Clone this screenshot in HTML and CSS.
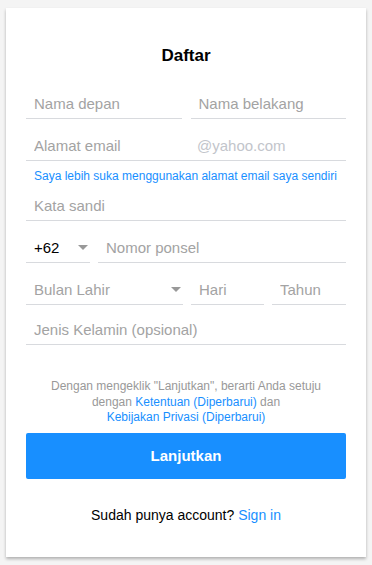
FILE: index.html
```html
<!DOCTYPE html>
<html lang="id">
<head>
<meta charset="utf-8">
<title>Daftar</title>
<link rel="stylesheet" href="styles.css">
</head>
<body>
<div class="card">
  <h1 class="title">Daftar</h1>
  <form class="form">
    <div class="row">
      <div class="field grow"><input class="inp" placeholder="Nama depan"></div>
      <div class="field grow"><input class="inp" placeholder="Nama belakang"></div>
    </div>
    <div class="row">
      <div class="field grow email">
        <input class="inp" placeholder="Alamat email">
        <span class="suffix">@yahoo.com</span>
      </div>
    </div>
    <a class="own-email" href="#">Saya lebih suka menggunakan alamat email saya sendiri</a>
    <div class="row tight">
      <div class="field grow"><input class="inp" type="password" placeholder="Kata sandi"></div>
    </div>
    <div class="row gap8">
      <div class="field select code"><span class="value">+62</span><span class="caret"></span></div>
      <div class="field grow"><input class="inp" placeholder="Nomor ponsel"></div>
    </div>
    <div class="row gap8">
      <div class="field select month"><span class="ph">Bulan Lahir</span><span class="caret"></span></div>
      <div class="field day"><input class="inp" placeholder="Hari"></div>
      <div class="field grow"><input class="inp" placeholder="Tahun"></div>
    </div>
    <div class="row last">
      <div class="field grow"><input class="inp" placeholder="Jenis Kelamin (opsional)"></div>
    </div>
    <p class="terms">Dengan mengeklik "Lanjutkan", berarti Anda setuju<br>dengan <a href="#">Ketentuan (Diperbarui)</a> dan<br><a href="#">Kebijakan Privasi (Diperbarui)</a></p>
    <button class="btn" type="button">Lanjutkan</button>
  </form>
  <p class="signin">Sudah punya account? <a href="#">Sign in</a></p>
</div>
</body>
</html>
```
FILE: styles.css
```css
* { box-sizing: border-box; }
html, body { margin: 0; padding: 0; }
body {
  background: #f4f4f4;
  font-family: "Liberation Sans", Arial, Helvetica, sans-serif;
  color: #000;
}
.card {
  margin: 8px 6px;
  width: 360px;
  height: 549px;
  background: #fff;
  box-shadow: 0 2px 3px rgba(0, 0, 0, 0.28);
  padding: 0 20px;
  display: flex;
  flex-direction: column;
}
.title {
  margin: 38px 0 0;
  font-size: 17px;
  line-height: 20px;
  font-weight: bold;
  text-align: center;
}
.form { display: flex; flex-direction: column; margin-top: 22px; }
.row {
  display: flex;
  gap: 9px;
  margin-top: 11px;
}
.row:first-child { margin-top: 0; }
.row.gap8 { gap: 8px; }
.row.tight { margin-top: 7px; }
.row.last { margin-top: 9px; }
.field {
  height: 31px;
  border-bottom: 1px solid #d8dade;
  display: flex;
  align-items: center;
  min-width: 0;
}
.grow { flex: 1; }
.inp {
  border: 0;
  outline: none;
  background: transparent;
  width: 100%;
  min-width: 0;
  height: 30px;
  padding: 0 0 0 8px;
  font-family: "Liberation Sans", Arial, Helvetica, sans-serif;
  font-size: 15px;
  color: #000;
}
.inp::placeholder { color: #a3a3a3; opacity: 1; }
.email .inp { flex: 1; }
.suffix {
  width: 149px;
  flex: none;
  font-size: 15px;
  color: #c2c5cb;
}
.own-email {
  display: block;
  margin-top: 8px;
  padding-left: 8px;
  font-size: 12px;
  line-height: 14px;
  color: #188fff;
  text-decoration: none;
  white-space: nowrap;
}
.select {
  padding: 0 2px 0 8px;
  justify-content: space-between;
  font-size: 15px;
}
.select .value { color: #000; }
.select .ph { color: #a3a3a3; }
.code { width: 64px; flex: none; }
.month { width: 157px; flex: none; }
.day { width: 73px; flex: none; }
.caret {
  width: 0;
  height: 0;
  border-left: 5px solid transparent;
  border-right: 5px solid transparent;
  border-top: 5px solid #999;
}
.terms {
  margin: 34px 0 0;
  text-align: center;
  font-size: 12px;
  line-height: 15.5px;
  color: #999;
}
.terms a { color: #188fff; text-decoration: none; }
.btn {
  margin-top: 7px;
  height: 46px;
  border: 0;
  border-radius: 2px;
  background: #188fff;
  color: #fff;
  font-family: "Liberation Sans", Arial, Helvetica, sans-serif;
  font-size: 15px;
  font-weight: bold;
}
.signin {
  margin: 27px 0 0;
  text-align: center;
  font-size: 14px;
  line-height: 18px;
}
.signin a { color: #188fff; text-decoration: none; }
```
